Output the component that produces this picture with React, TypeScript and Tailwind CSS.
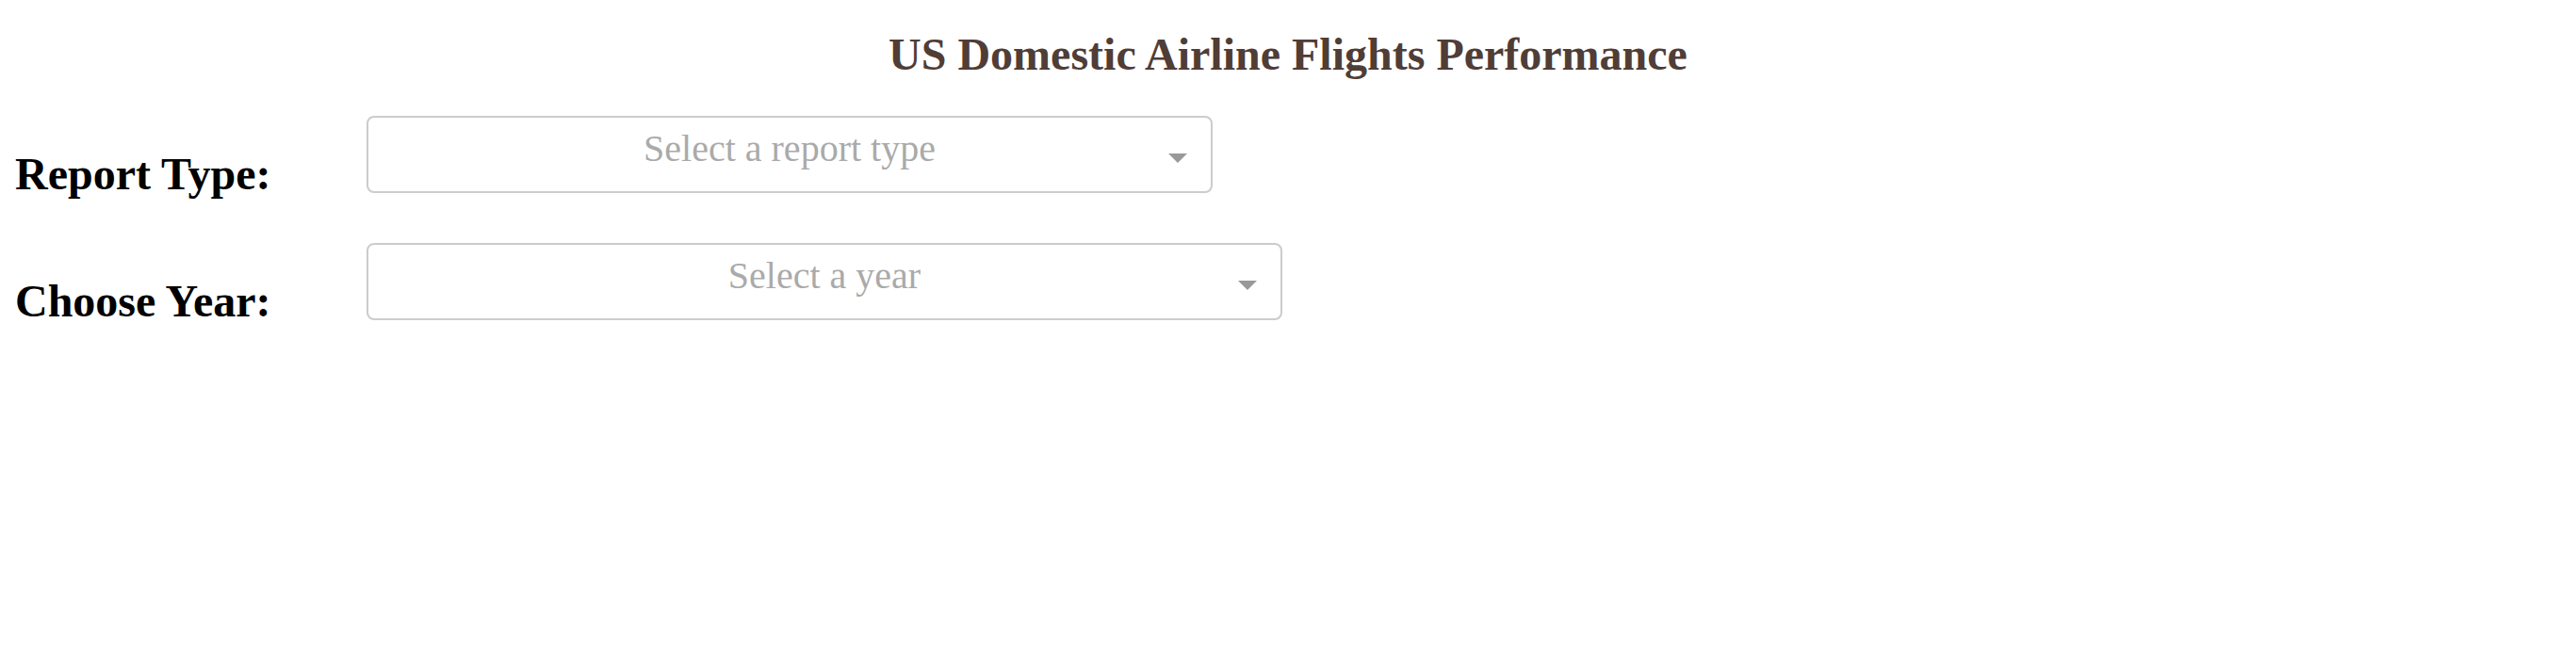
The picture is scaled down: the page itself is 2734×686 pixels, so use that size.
import React from "react";

type DropdownProps = {
  placeholder: string;
  width: string;
};

function Dropdown({ placeholder, width }: DropdownProps) {
  return (
    <div className={`pt-[6px] shrink-0 ${width}`}>
      <div className="relative h-[82px] border-2 border-[#cccccc] rounded-lg bg-white flex items-center justify-center pb-3">
        <span className="text-[40px] leading-[44px] text-[#aaaaaa]">{placeholder}</span>
        {/* caret */}
        <span className="absolute right-[25px] top-[38px] w-0 h-0 border-x-[10px] border-t-[10px] border-x-transparent border-t-[#999999]"></span>
      </div>
    </div>
  );
}

export default function App() {
  const rows = [
    { label: "Report Type:", placeholder: "Select a report type", width: "w-[898px]" },
    { label: "Choose Year:", placeholder: "Select a year", width: "w-[972px]" },
  ];

  return (
    <div className="min-h-screen bg-white px-4 pt-[30px] font-['Liberation_Serif','Times_New_Roman',serif]">
      <h1 className="text-center text-[48px] leading-[55px] font-bold text-[#503D36] mb-8">
        US Domestic Airline Flights Performance
      </h1>

      {rows.map((row) => (
        <div key={row.label} className="flex">
          <div className="w-[373px] shrink-0">
            <h2 className="my-10 text-[48px] leading-[55px] font-bold text-black">{row.label}</h2>
          </div>
          <Dropdown placeholder={row.placeholder} width={row.width} />
        </div>
      ))}
    </div>
  );
}
